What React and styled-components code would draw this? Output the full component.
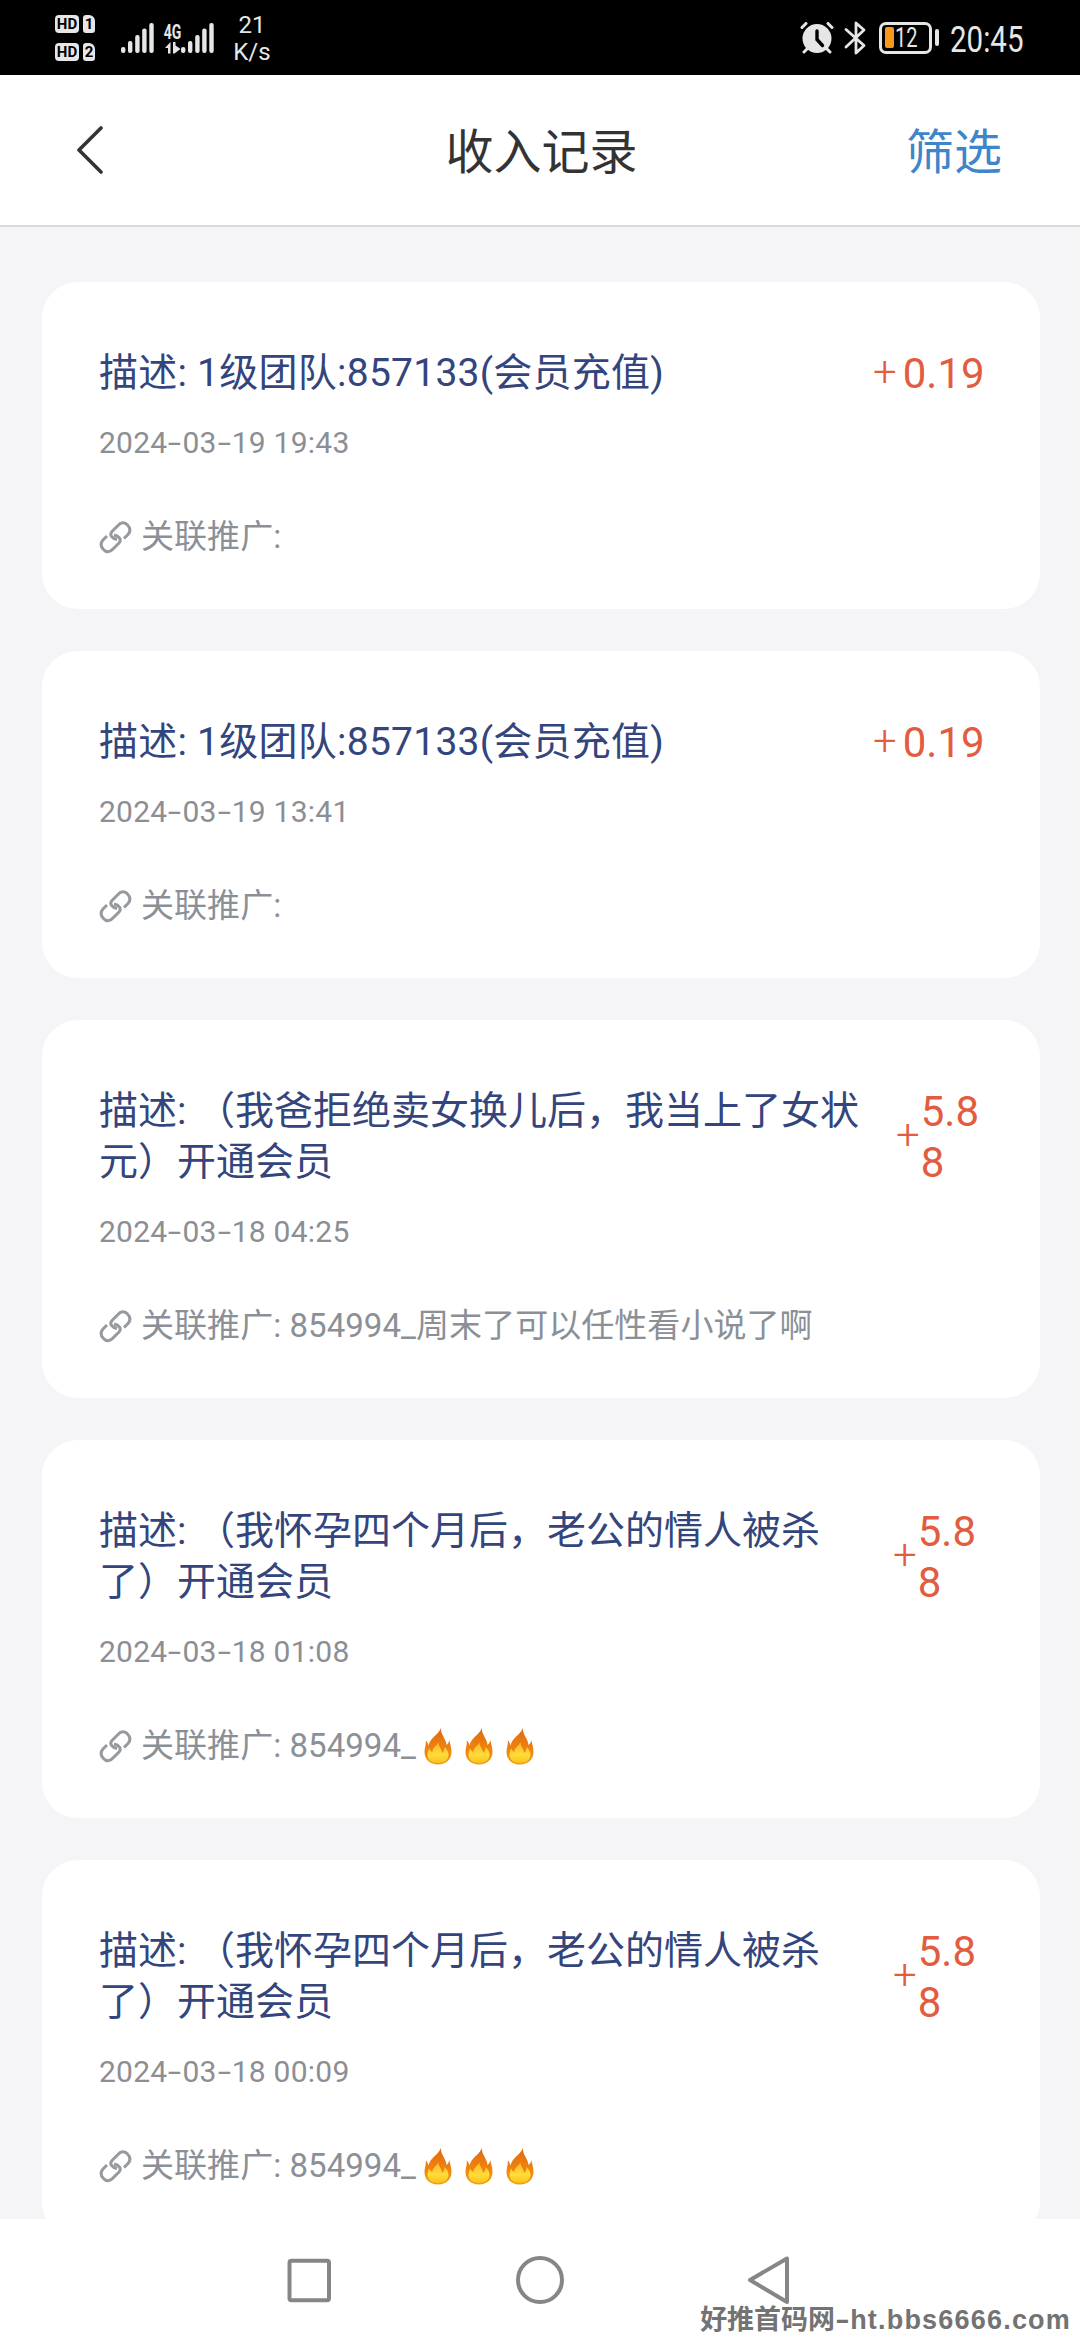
import React from 'react'
import styled, { createGlobalStyle } from 'styled-components'

const GlobalStyle=createGlobalStyle`
    *{
        box-sizing:border-box;
    }
    body{
        margin:0;
        background:#f5f5f8;
        font-family:Roboto, "Noto Sans CJK SC", sans-serif;
    }
`;
const Page=styled.div`
    width:1080px;
    height:2340px;
    display:flex;
    flex-direction:column;
    overflow:hidden;
`;

/* 状态栏 */
const StatusBar=styled.div`
    height:75px;
    flex:none;
    display:flex;
    align-items:center;
    justify-content:space-between;
    padding:0 55px 0 55px;
    background:#000;
    color:#e6e6e6;
`;
const StatusGroup=styled.div`
    display:flex;
    align-items:center;
`;
const HdList=styled.div`
    display:flex;
    flex-direction:column;
    gap:10px;
    margin-right:26px;
`;
const HdRow=styled.div`
    display:flex;
    gap:4px;
`;
const HdTag=styled.span`
    width:${(props)=>props.$w}px;
    height:18px;
    border-radius:${(props)=>props.$cut ? '3px 6px 3px 3px' : '4px'};
    background:#e6e6e6;
    color:#000;
    font-size:15px;
    font-weight:700;
    line-height:18px;
    text-align:center;
`;
const NetType=styled.div`
    display:flex;
    flex-direction:column;
    align-items:center;
    width:17px;
    margin-left:10px;
`;
/* 窄体数字 */
const Narrow=styled.span`
    display:inline-block;
    font-size:${(props)=>props.$size}px;
    font-weight:${(props)=>props.$bold ? 700 : 400};
    line-height:20px;
    white-space:nowrap;
    transform:scaleX(${(props)=>props.$x});
    transform-origin:${(props)=>props.$bold ? 'center' : 'left center'};
`;
const Speed=styled.div`
    margin-left:19px;
    padding-top:3px;
    width:38px;
    font-size:24px;
    line-height:27px;
    text-align:center;
`;
const BluetoothBox=styled.div`
    display:flex;
    margin-left:10px;
`;
const Battery=styled.div`
    display:flex;
    align-items:center;
    width:53px;
    height:32px;
    margin-left:13px;
    padding-left:3px;
    border:3px solid #e6e6e6;
    border-radius:7px;
`;
const BatteryLevel=styled.span`
    flex:none;
    width:9px;
    height:21px;
    margin-right:1px;
    border-radius:2px;
    background:#f7981d;
`;
const BatteryTip=styled.span`
    width:4px;
    height:17px;
    margin-left:3px;
    border-radius:2px;
    background:#e6e6e6;
`;
const Clock=styled.span`
    display:flex;
    width:75px;
    margin-left:11px;
    padding-top:4px;
`;

/* 标题栏 */
const Header=styled.header`
    height:152px;
    flex:none;
    display:grid;
    grid-template-columns:1fr auto 1fr;
    align-items:center;
    padding:0 78px 0 76px;
    border-bottom:2px solid #d8d9db;
    background:#fff;
`;
const HeaderTitle=styled.h1`
    margin:0;
    padding:6px 0 0 5px;
    font-size:48px;
    font-weight:400;
    line-height:60px;
    color:#333;
`;
const FilterButton=styled.button`
    justify-self:end;
    padding:6px 0 0;
    border:0;
    background:none;
    font-family:inherit;
    font-size:48px;
    line-height:60px;
    color:#3f85c9;
`;

/* 列表 */
const List=styled.main`
    flex:1;
    min-height:0;
    display:flex;
    flex-direction:column;
    gap:42px;
    padding:55px 40px 0 42px;
    overflow:hidden;
`;
const Card=styled.section`
    flex:none;
    padding:66px 57px 50px 57px;
    border-radius:36px;
    background:#fff;
`;
const CardTop=styled.div`
    display:flex;
    justify-content:space-between;
    align-items:flex-start;
`;
const Desc=styled.p`
    width:${(props)=>props.$w}px;
    margin:0;
    font-size:39px;
    letter-spacing:${(props)=>props.$ls || 0}px;
    line-height:51px;
    color:#33457c;
`;
const Amount=styled.div`
    display:flex;
    align-items:center;
    width:${(props)=>props.$w}px;
    font-size:42px;
    line-height:51px;
    color:#e25d3f;
`;
const Plus=styled.span`
    margin-top:-5px;
    font-weight:300;
`;
const Num=styled.span`
    margin-left:${(props)=>props.$short ? 6 : 1}px;
    white-space:${(props)=>props.$short ? 'nowrap' : 'normal'};
    word-break:break-all;
`;
const Time=styled.div`
    margin-top:24px;
    font-size:30px;
    letter-spacing:.25px;
    line-height:40px;
    color:#8b8e94;
`;
const Dash=styled.span`
    display:inline-block;
    width:15px;
    text-align:center;
    transform:scaleX(1.6);
`;
const Source=styled.div`
    display:flex;
    align-items:center;
    height:44px;
    margin-top:52px;
    font-size:33px;
    letter-spacing:.05px;
    line-height:44px;
    color:#8b9097;
`;
const SourceText=styled.span`
    margin-left:9px;
    white-space:pre;
`;
const Flames=styled.span`
    display:flex;
    gap:13px;
    margin-left:8px;
    padding-top:1px;
`;

/* 导航键 */
const NavBar=styled.nav`
    position:relative;
    height:121px;
    flex:none;
    display:flex;
    justify-content:center;
    align-items:center;
    gap:181px;
    background:#fff;
`;
const Watermark=styled.div`
    position:absolute;
    right:9px;
    bottom:2px;
    font-family:"Liberation Sans", "Noto Sans CJK SC", sans-serif;
    font-size:27px;
    font-weight:700;
    line-height:36px;
    color:#737373;
    white-space:nowrap;
`;
const Site=styled.span`
    letter-spacing:1.2px;
`;

const Signal=()=>(
    <svg width="33" height="32" viewBox="0 0 33 32" fill="#e6e6e6">
        <rect x="0" y="25" width="4.4" height="6" rx="2"/>
        <rect x="7" y="19" width="4.4" height="12" rx="2"/>
        <rect x="14.2" y="13" width="4.4" height="18" rx="2"/>
        <rect x="21.2" y="6.5" width="4.4" height="24.5" rx="2"/>
        <rect x="28.3" y="1" width="4.4" height="30" rx="2"/>
    </svg>
)
const DataArrows=()=>(
    <svg width="16" height="12" viewBox="0 0 16 12" fill="#e6e6e6">
        <path d="M5.500 0v11.500H3V6H0zM8 0h2.500v3.500L15.500 7l-6 4.500H8z"/>
    </svg>
)
const AlarmIcon=()=>(
    <svg width="34" height="32" viewBox="0 0 34 32" fill="none" strokeLinecap="round">
        <path d="M4 30l5-5M30 30l-5-5" stroke="#e6e6e6" strokeWidth="3"/>
        <circle cx="17" cy="16.500" r="14.500" fill="#e6e6e6"/>
        <path d="M2 5.500l4-4M32 5.500l-4-4" stroke="#000" strokeWidth="7"/>
        <path d="M2 5.500l4-4M32 5.500l-4-4" stroke="#e6e6e6" strokeWidth="3"/>
        <path d="M17 9v8.500l5.500 6" stroke="#000" strokeWidth="3.400"/>
    </svg>
)
const BluetoothIcon=()=>(
    <svg width="22" height="34" viewBox="0 0 22 34" fill="none" stroke="#e6e6e6" strokeWidth="2.800" strokeLinecap="round" strokeLinejoin="round">
        <path d="M2 8.500L20 24.500L12 32V2L20 9L2 26"/>
    </svg>
)
const LinkIcon=()=>(
    <svg width="33" height="33" viewBox="0 0 33 33" fill="none" stroke="#96999f" strokeWidth="3">
        <path d="M18 18.500C13 17.500 10 14 13 10.500L19 4.500C22 1 26 1 28.500 4C32 7.500 31.500 10.500 29 13.500L25 17.500"/>
        <path d="M15 14C20 15 23 18.500 20 22L14 28C11 31.500 7 31.500 4.500 28.500C1 25 1.500 22 4 19L8 15"/>
    </svg>
)
const Flame=()=>(
    <svg width="28" height="37" viewBox="0 0 28 37">
        <defs>
            <linearGradient id="fireOuter" x1="0" y1="0" x2="0" y2="1">
                <stop offset="0" stopColor="#dd6a10"/>
                <stop offset=".55" stopColor="#f0820f"/>
                <stop offset="1" stopColor="#eea016"/>
            </linearGradient>
            <linearGradient id="fireInner" x1="0" y1="0" x2="0" y2="1">
                <stop offset="0" stopColor="#fbb62c"/>
                <stop offset=".6" stopColor="#ffdc3a"/>
                <stop offset="1" stopColor="#fcc21c"/>
            </linearGradient>
        </defs>
        <path d="M17 0c-.5 7 5 10 5.500 17 1.500-1 2.500-3 2.800-5C26 16 27.500 19 27.500 24c0 7.500-5.500 12.500-13.500 12.500S.5 31.500 .5 24c0-4.500 1.800-7 1.300-11.500 1.500 1 2.200 3 2.700 5C6 10 14 7 17 0z" fill="url(#fireOuter)"/>
        <path d="M14.500 14c-.5 4.500 3.500 6.500 3.500 11 2-1.500 2.500-3.500 2.500-6 3 3 4 5 4 8 0 5-4.500 8-10.500 8S3.500 32 3.500 27c0-3 1-4.500 1.500-6.500 1 1.500 2 3 3.500 3.500C8 20 13 18 14.500 14z" fill="url(#fireInner)"/>
    </svg>
)

const records=[
    {desc:'描述: 1级团队:857133(会员充值)', amount:'0.19', time:'2024-03-19 19:43', source:'', w:700, aw:110, ls:.25, short:true},
    {desc:'描述: 1级团队:857133(会员充值)', amount:'0.19', time:'2024-03-19 13:41', source:'', w:700, aw:110, ls:.25, short:true},
    {desc:'描述: （我爸拒绝卖女换儿后，我当上了女状元）开通会员', amount:'5.88', time:'2024-03-18 04:25', source:'854994_周末了可以任性看小说了啊', w:770, aw:87},
    {desc:'描述: （我怀孕四个月后，老公的情人被杀了）开通会员', amount:'5.88', time:'2024-03-18 01:08', source:'854994_', flames:3, w:750, aw:90},
    {desc:'描述: （我怀孕四个月后，老公的情人被杀了）开通会员', amount:'5.88', time:'2024-03-18 00:09', source:'854994_', flames:3, w:750, aw:90},
]

const RecordCard=({record})=>{
    //日期里的横线比字体自带的宽，单独包一层
    const parts=record.time.split('-')
    return (
        <Card>
            <CardTop>
                <Desc $w={record.w} $ls={record.ls}>{record.desc}</Desc>
                <Amount $w={record.aw}>
                    <Plus>+</Plus>
                    <Num $short={record.short}>{record.amount}</Num>
                </Amount>
            </CardTop>
            <Time>{parts[0]}<Dash>-</Dash>{parts[1]}<Dash>-</Dash>{parts[2]}</Time>
            <Source>
                <LinkIcon/>
                <SourceText>关联推广: {record.source}</SourceText>
                {record.flames && (
                    <Flames>
                        {Array.from({length:record.flames},(_,i)=><Flame key={i}/>)}
                    </Flames>
                )}
            </Source>
        </Card>
    )
}

const App=()=>{
    return (
        <Page>
            <GlobalStyle/>
            <StatusBar>
                <StatusGroup>
                    <HdList>
                        <HdRow><HdTag $w={24}>HD</HdTag><HdTag $w={12} $cut>1</HdTag></HdRow>
                        <HdRow><HdTag $w={24}>HD</HdTag><HdTag $w={12} $cut>2</HdTag></HdRow>
                    </HdList>
                    <Signal/>
                    <NetType>
                        <Narrow $size={20} $x={.7} $bold>4G</Narrow>
                        <DataArrows/>
                    </NetType>
                    <Signal/>
                    <Speed>21 K/s</Speed>
                </StatusGroup>
                <StatusGroup>
                    <AlarmIcon/>
                    <BluetoothBox><BluetoothIcon/></BluetoothBox>
                    <Battery><BatteryLevel/><Narrow $size={27} $x={.74}>12</Narrow></Battery>
                    <BatteryTip/>
                    <Clock><Narrow $size={36} $x={.82}>20:45</Narrow></Clock>
                </StatusGroup>
            </StatusBar>
            <Header>
                <svg width="28" height="48" viewBox="0 0 28 48" fill="none" stroke="#333" strokeWidth="3.600" strokeLinecap="round" strokeLinejoin="round">
                    <path d="M25 2L3 24l22 22"/>
                </svg>
                <HeaderTitle>收入记录</HeaderTitle>
                <FilterButton>筛选</FilterButton>
            </Header>
            <List>
                {records.map((record,i)=><RecordCard key={i} record={record}/>)}
            </List>
            <NavBar>
                <svg width="48" height="48" viewBox="0 0 48 48" fill="none" stroke="#868686" strokeWidth="4">
                    <rect x="2.500" y="4.800" width="39.500" height="39.500" rx="2"/>
                </svg>
                <svg width="48" height="48" viewBox="0 0 48 48" fill="none" stroke="#868686" strokeWidth="4">
                    <circle cx="24" cy="24" r="22"/>
                </svg>
                <svg width="48" height="48" viewBox="0 0 48 48" fill="none" stroke="#868686" strokeWidth="4" strokeLinejoin="round">
                    <path d="M42 2.500v43.500L5 24z"/>
                </svg>
                <Watermark>好推首码网<Dash>-</Dash><Site>ht.bbs6666.com</Site></Watermark>
            </NavBar>
        </Page>
    )
}

export default App
